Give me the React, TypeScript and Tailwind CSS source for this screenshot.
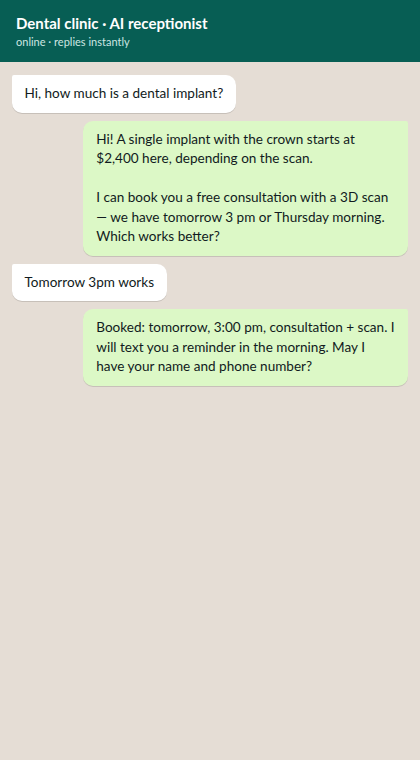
type Message = { from: 'user' | 'bot'; text: string };

const MESSAGES: Message[] = [
  { from: 'user', text: 'Hi, how much is a dental implant?' },
  {
    from: 'bot',
    text: 'Hi! A single implant with the crown starts at $2,400 here, depending on the scan.\n\nI can book you a free consultation with a 3D scan — we have tomorrow 3 pm or Thursday morning. Which works better?',
  },
  { from: 'user', text: 'Tomorrow 3pm works' },
  {
    from: 'bot',
    text: 'Booked: tomorrow, 3:00 pm, consultation + scan. I will text you a reminder in the morning. May I have your name and phone number?',
  },
];

function Bubble({ message }: { message: Message }) {
  const mine = message.from === 'user';
  return (
    <div
      className={
        mine
          ? 'max-w-[82%] self-start whitespace-pre-wrap rounded-[10px] rounded-tl-[2px] bg-white px-[12.5px] py-[9px] text-[13.55px] leading-[19.5px] text-[#111b21] shadow-[0_1px_0.5px_rgba(0,0,0,0.13)]'
          : 'max-w-[82%] self-end whitespace-pre-wrap rounded-[10px] rounded-tr-[2px] bg-[#dcf8c6] px-[13px] py-[9px] text-[13.55px] leading-[19.5px] text-[#111b21] shadow-[0_1px_0.5px_rgba(0,0,0,0.13)]'
      }
    >
      {message.text}
    </div>
  );
}

export default function App() {
  return (
    <div className="flex min-h-[760px] flex-col bg-[#e5ddd5] font-['Lato','Noto_Sans',sans-serif]">
      <header className="bg-[#075e54] px-4 py-3 text-white">
        <div className="text-[15px] font-bold leading-[22px]">Dental clinic · AI receptionist</div>
        <div className="text-[11px] leading-4 text-[#cde6e2]">online · replies instantly</div>
      </header>
      <main className="flex flex-col gap-2 px-3 pt-[13px] pb-3">
        {MESSAGES.map((m, i) => (
          <Bubble key={i} message={m} />
        ))}
      </main>
    </div>
  );
}
